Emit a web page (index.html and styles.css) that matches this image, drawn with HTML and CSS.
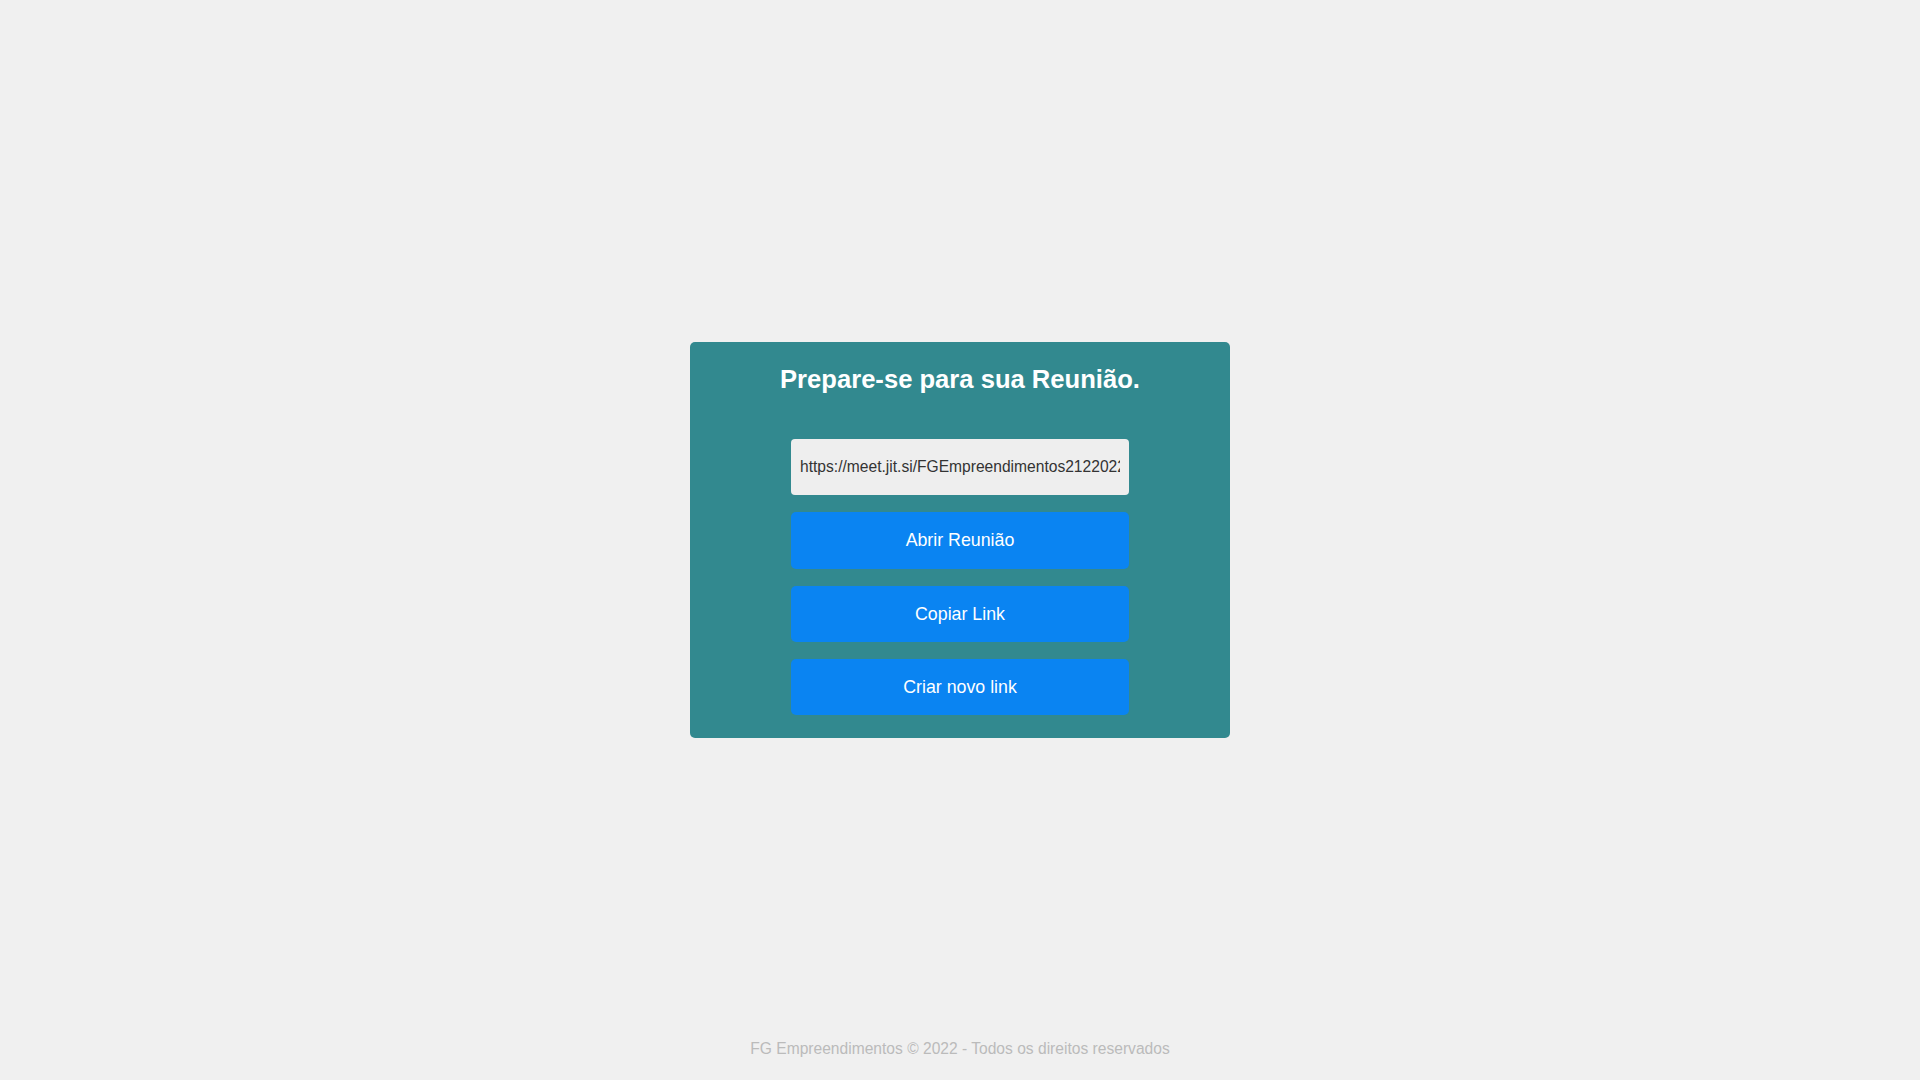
FILE: index.html
```html
<!DOCTYPE html>
<html lang="pt-BR">
<head>
<meta charset="utf-8">
<title>Reunião</title>
<link rel="stylesheet" href="styles.css">
</head>
<body>
<div class="page">
  <main class="card">
    <h2 class="card-title">Prepare-se para sua Reunião.</h2>
    <input class="link-input" type="text" value="https://meet.jit.si/FGEmpreendimentos2122022104530" readonly>
    <button class="btn" type="button">Abrir Reunião</button>
    <button class="btn" type="button">Copiar Link</button>
    <button class="btn" type="button">Criar novo link</button>
  </main>
  <footer class="footer">FG Empreendimentos © 2022 - Todos os direitos reservados</footer>
</div>
</body>
</html>
```

FILE: styles.css
```css
html, body {
  margin: 0;
  padding: 0;
  height: 100%;
}

body {
  background: #f0f0f0;
  font-family: "Liberation Sans", Arial, sans-serif;
}

.page {
  height: 100vh;
  display: grid;
  grid-template-rows: 1fr auto 1fr;
  justify-items: center;
}

.card {
  grid-row: 2;
  width: 540px;
  box-sizing: border-box;
  background: #32898f;
  border-radius: 5px;
  padding: 22px 0 23px;
  display: flex;
  flex-direction: column;
  align-items: center;
}

.card-title {
  margin: 0 0 45px;
  font-size: 25.6px;
  line-height: 30px;
  font-weight: bold;
  color: #ffffff;
}

.link-input {
  width: 338px;
  height: 56px;
  box-sizing: border-box;
  border: none;
  border-radius: 4px;
  background: #eeeeee;
  color: #333333;
  font-family: "Liberation Sans", Arial, sans-serif;
  font-size: 15.6px;
  padding: 0 9px;
  outline: none;
  margin: 0;
}

.btn {
  width: 338px;
  height: 56px;
  margin-top: 17px;
  border: none;
  border-radius: 5px;
  background: #0a84f2;
  color: #ffffff;
  font-family: "Liberation Sans", Arial, sans-serif;
  font-size: 17.8px;
  cursor: pointer;
  padding: 0;
}

.btn:first-of-type {
  height: 57px;
}

.footer {
  grid-row: 3;
  align-self: end;
  padding-bottom: 22px;
  color: #bbbbbb;
  font-size: 15.6px;
  line-height: 18px;
}
```
